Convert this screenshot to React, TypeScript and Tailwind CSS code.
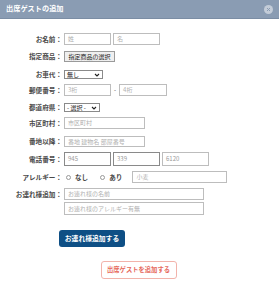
import React from 'react';

const font = { fontFamily: '"Noto Sans CJK JP", "Noto Sans", sans-serif' };

// plain text box used for every form field
function Field({ w, ph, value, dark }: { w: string; ph?: string; value?: string; dark?: boolean }) {
    return (
        <div
            className={`${w} h-full border bg-white flex items-center pl-[3px] text-[6px] leading-none ${
                dark ? 'border-[#8a8a8a]' : 'border-[#bdbdbd]'
            } ${value ? 'text-[#9a9a9a]' : 'text-[#b0b0b0]'}`}
        >
            {value ?? ph}
        </div>
    );
}

function Select({ w, label }: { w: string; label: string }) {
    return (
        <div className={`${w} h-full border border-[#8a8a8a] bg-white flex items-center justify-between pl-[2px] pr-[2px] text-[6px] leading-none text-[#222]`}>
            <span>{label}</span>
            <svg width="6" height="4" viewBox="0 0 6 4">
                <path d="M1 1l2 2 2-2" stroke="#222" strokeWidth="1.1" fill="none" />
            </svg>
        </div>
    );
}

function Row({ label, cls, children }: { label: string; cls: string; children: React.ReactNode }) {
    return (
        <div className={`flex items-center ${cls}`}>
            <div className="w-[62px] shrink-0 text-right text-[6.6px] font-bold text-[#4a4a4a] leading-none whitespace-nowrap">
                {label}
            </div>
            <div className="ml-[2px] flex items-center h-full">{children}</div>
        </div>
    );
}

function Radio({ label }: { label: string }) {
    return (
        <div className="flex items-center">
            <span className="w-[5px] h-[5px] rounded-full border border-[#999] bg-white" />
            <span className="ml-[4px] text-[6.6px] font-bold text-[#4a4a4a] leading-none">{label}</span>
        </div>
    );
}

export default function App() {
    return (
        <div className="w-[279px] h-[284px] bg-white overflow-hidden" style={font}>
            {/* Title bar */}
            <div className="h-[19px] bg-[#8a9cb3] border-b border-[#7b8da4] flex items-center justify-between pl-[6px] pr-[6px]">
                <span className="text-[7.2px] font-bold text-white leading-none">出席ゲストの追加</span>
                <svg width="9" height="9" viewBox="0 0 9 9">
                    <circle cx="4.5" cy="4.5" r="4.5" fill="#c3ccd8" />
                    <path d="M3 3l3 3M6 3l-3 3" stroke="#8a9cb3" strokeWidth="1" />
                </svg>
            </div>

            <div className="flex flex-col">
                <Row label="お名前：" cls="mt-[14px] h-[12px]">
                    <Field w="w-[47px]" ph="姓" />
                    <div className="ml-[2px] h-full flex">
                        <Field w="w-[47px]" ph="名" />
                    </div>
                </Row>

                <Row label="指定商品：" cls="mt-[6px] h-[11px]">
                    <div className="h-full w-[51px] border border-[#9a9a9a] bg-[#efefef] flex items-center justify-center text-[6px] leading-none text-[#222]">
                        指定商品の選択
                    </div>
                </Row>

                <Row label="お車代：" cls="mt-[8px] h-[9px]">
                    <Select w="w-[39px]" label="無し" />
                </Row>

                <Row label="郵便番号：" cls="mt-[5px] h-[12px]">
                    <Field w="w-[47px]" ph="3桁" />
                    <span className="mx-[3px] text-[6px] text-[#444] leading-none">-</span>
                    <Field w="w-[48px]" ph="4桁" />
                </Row>

                <Row label="都道府県：" cls="mt-[7px] h-[9px]">
                    <Select w="w-[36px]" label="- 選択 -" />
                </Row>

                <Row label="市区町村：" cls="mt-[5px] h-[12px]">
                    <Field w="w-[81px]" ph="市区町村" />
                </Row>

                <Row label="番地以降：" cls="mt-[7px] h-[11px]">
                    <Field w="w-[81px]" ph="番地 建物名 部屋番号" />
                </Row>

                <Row label="電話番号：" cls="mt-[5px] h-[14px]">
                    <Field w="w-[47px]" value="945" dark />
                    <div className="ml-[2px] h-full flex">
                        <Field w="w-[47px]" value="339" dark />
                    </div>
                    <div className="ml-[2px] h-full flex">
                        <Field w="w-[47px]" value="6120" />
                    </div>
                </Row>

                <Row label="アレルギー：" cls="mt-[5px] h-[12px]">
                    <div className="ml-[2px] flex items-center gap-[12px]">
                        <Radio label="なし" />
                        <Radio label="あり" />
                    </div>
                    <div className="ml-[10px] h-full flex">
                        <Field w="w-[95px]" ph="小麦" />
                    </div>
                </Row>

                <Row label="お連れ様追加：" cls="mt-[5px] h-[12px]">
                    <Field w="w-[140px]" ph="お連れ様の名前" />
                </Row>
                <div className="mt-[2px] ml-[64px] h-[13px] flex">
                    <Field w="w-[140px]" ph="お連れ様のアレルギー有無" />
                </div>

                <div className="mt-[7px] ml-[59px]">
                    <button className="w-[66px] h-[17px] rounded-[3px] bg-[#0e4f85] text-white text-[6.8px] font-bold leading-none">
                        お連れ様追加する
                    </button>
                </div>

                <div className="mt-[14px] flex justify-center">
                    <button className="ml-[-2px] w-[76px] h-[18px] rounded-[3px] border border-[#f2b3ab] bg-white text-[#e6695c] text-[6.3px] font-bold leading-none">
                        出席ゲストを追加する
                    </button>
                </div>
            </div>
        </div>
    );
}
